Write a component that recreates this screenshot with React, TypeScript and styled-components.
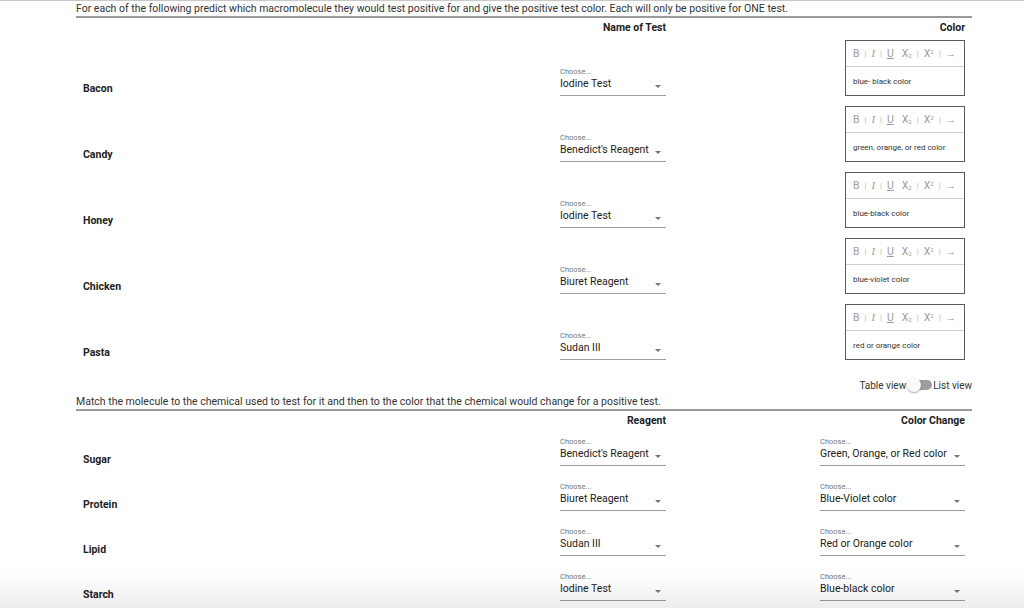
import styled, { createGlobalStyle } from 'styled-components';

const GlobalStyle = createGlobalStyle`
  html, body {
    margin: 0;
    padding: 0;
    background: #fff;
  }
  body {
    border-top: 1px solid #c8c8c8;
    font-family: Roboto, "Liberation Sans", Arial, sans-serif;
    color: #333;
  }
`;

const Page = styled.div`
  width: 896px;
  margin-left: 76px;
  padding-top: 2px;
`;

const Prompt = styled.div`
  font-size: 10.5px;
  line-height: 12px;
  color: #333;
  padding-bottom: 1px;
  border-bottom: 2px solid #9a9a9a;
`;

const Grid = styled.div<{ $cols: string }>`
  display: grid;
  grid-template-columns: ${(p) => p.$cols};
  padding: 0 7px;
`;

const HeadRow = styled(Grid)<{ $h: number }>`
  height: ${(p) => p.$h}px;
  align-items: center;
`;

const HeadCell = styled.div<{ $col: number }>`
  grid-column: ${(p) => p.$col};
  text-align: right;
  font-weight: 700;
  font-size: 10.5px;
  color: #222;
  white-space: nowrap;
`;

const Row = styled(Grid)<{ $h: number }>`
  height: ${(p) => p.$h}px;
`;

const Label = styled.div<{ $pb: number }>`
  grid-column: 1;
  align-self: end;
  padding-bottom: ${(p) => p.$pb}px;
  font-weight: 700;
  font-size: 10.5px;
  line-height: 13px;
  color: #222;
`;

const SelectWrap = styled.div<{ $col: number; $pb: number }>`
  grid-column: ${(p) => p.$col};
  align-self: end;
  margin-bottom: ${(p) => p.$pb}px;
  border-bottom: 1px solid #9e9e9e;
  padding-bottom: 4px;
`;

const Hint = styled.div`
  font-size: 7.5px;
  line-height: 10px;
  color: #777;
`;

const Value = styled.div`
  display: flex;
  align-items: center;
  justify-content: space-between;
  font-size: 10.5px;
  line-height: 14px;
  color: #222;
  white-space: nowrap;
`;

const Caret = styled.span`
  width: 0;
  height: 0;
  margin: 4px 5px 0 4px;
  border-left: 3px solid transparent;
  border-right: 3px solid transparent;
  border-top: 3px solid #777;
  flex-shrink: 0;
`;

const Editor = styled.div`
  grid-column: 4;
  align-self: start;
  margin-top: 4px;
  height: 54px;
  border: 1px solid #5a5a5a;
  display: flex;
  flex-direction: column;
`;

const Toolbar = styled.div`
  height: 25px;
  display: flex;
  align-items: center;
  gap: 5px;
  padding-left: 7px;
  border-bottom: 1px solid #cfcfcf;
  color: #9c9c9c;
  font-size: 10.5px;
`;

const Tool = styled.span<{ $u?: boolean; $serif?: boolean }>`
  text-decoration: ${(p) => (p.$u ? 'underline' : 'none')};
  font-style: ${(p) => (p.$serif ? 'italic' : 'normal')};
  font-family: ${(p) => (p.$serif ? '"Liberation Serif", serif' : 'inherit')};
`;

const Sep = styled.span`
  color: #b5b5b5;
  font-size: 8px;
`;

const Sub = styled.span`
  font-size: 6px;
  vertical-align: -1px;
`;

const Sup = styled.span`
  font-size: 6px;
  vertical-align: 3px;
`;

const EditorText = styled.div`
  flex: 1;
  display: flex;
  align-items: center;
  padding-left: 7px;
  font-size: 8px;
  color: #333;
`;

const ToggleRow = styled.div`
  display: flex;
  justify-content: flex-end;
  align-items: center;
  height: 18px;
  margin-top: 10px;
  font-size: 10px;
  color: #333;
`;

const Track = styled.span`
  position: relative;
  width: 24px;
  height: 10px;
  border-radius: 5px;
  background: #9e9e9e;
  margin: 0 1px 0 2px;
`;

const Thumb = styled.span`
  position: absolute;
  left: -1px;
  top: -2px;
  width: 14px;
  height: 14px;
  border-radius: 50%;
  background: #fafafa;
  box-shadow: 0 1px 2px rgba(0, 0, 0, 0.35);
`;

const Prompt2 = styled(Prompt)`
  margin-top: 2px;
`;

const BottomShade = styled.div`
  position: fixed;
  left: 0;
  right: 0;
  bottom: 0;
  height: 36px;
  pointer-events: none;
  background: linear-gradient(to bottom, rgba(0, 0, 0, 0), rgba(0, 0, 0, 0.07));
`;

function Select({ value, col, pb }: { value: string; col: number; pb: number }) {
  return (
    <SelectWrap $col={col} $pb={pb}>
      <Hint>Choose...</Hint>
      <Value>
        <span>{value}</span>
        <Caret />
      </Value>
    </SelectWrap>
  );
}

function ColorEditor({ text }: { text: string }) {
  return (
    <Editor>
      <Toolbar>
        <Tool>B</Tool>
        <Sep>|</Sep>
        <Tool $serif>I</Tool>
        <Sep>|</Sep>
        <Tool $u>U</Tool>
        <Tool style={{ marginLeft: 3 }}>
          X<Sub>2</Sub>
        </Tool>
        <Sep>|</Sep>
        <Tool>
          X<Sup>2</Sup>
        </Tool>
        <Sep>|</Sep>
        <Tool>→</Tool>
      </Toolbar>
      <EditorText>{text}</EditorText>
    </Editor>
  );
}

const foods = [
  { name: 'Bacon', test: 'Iodine Test', color: 'blue- black color' },
  { name: 'Candy', test: "Benedict's Reagent", color: 'green, orange, or red color' },
  { name: 'Honey', test: 'Iodine Test', color: 'blue-black color' },
  { name: 'Chicken', test: 'Biuret Reagent', color: 'blue-violet color' },
  { name: 'Pasta', test: 'Sudan III', color: 'red or orange color' },
];

const molecules = [
  { name: 'Sugar', reagent: "Benedict's Reagent", color: 'Green, Orange, or Red color' },
  { name: 'Protein', reagent: 'Biuret Reagent', color: 'Blue-Violet color' },
  { name: 'Lipid', reagent: 'Sudan III', color: 'Red or Orange color' },
  { name: 'Starch', reagent: 'Iodine Test', color: 'Blue-black color' },
];

const cols1 = '477px 106px 179px 120px';
const cols2 = '477px 106px 154px 145px';

export default function App() {
  return (
    <>
      <GlobalStyle />
      <Page>
        <Prompt>
          For each of the following predict which macromolecule they would test positive for and give the
          positive test color. Each will only be positive for ONE test.
        </Prompt>
        <HeadRow $cols={cols1} $h={18}>
          <HeadCell $col={2}>Name of Test</HeadCell>
          <HeadCell $col={4}>Color</HeadCell>
        </HeadRow>
        {foods.map((f) => (
          <Row key={f.name} $cols={cols1} $h={66}>
            <Label $pb={7}>{f.name}</Label>
            <Select value={f.test} col={2} pb={6} />
            <ColorEditor text={f.color} />
          </Row>
        ))}
        <ToggleRow>
          Table view
          <Track>
            <Thumb />
          </Track>
          List view
        </ToggleRow>
        <Prompt2>
          Match the molecule to the chemical used to test for it and then to the color that the chemical would
          change for a positive test.
        </Prompt2>
        <HeadRow $cols={cols2} $h={18}>
          <HeadCell $col={2}>Reagent</HeadCell>
          <HeadCell $col={4}>Color Change</HeadCell>
        </HeadRow>
        {molecules.map((m) => (
          <Row key={m.name} $cols={cols2} $h={45}>
            <Label $pb={8}>{m.name}</Label>
            <Select value={m.reagent} col={2} pb={8} />
            <Select value={m.color} col={4} pb={8} />
          </Row>
        ))}
      </Page>
      <BottomShade />
    </>
  );
}
